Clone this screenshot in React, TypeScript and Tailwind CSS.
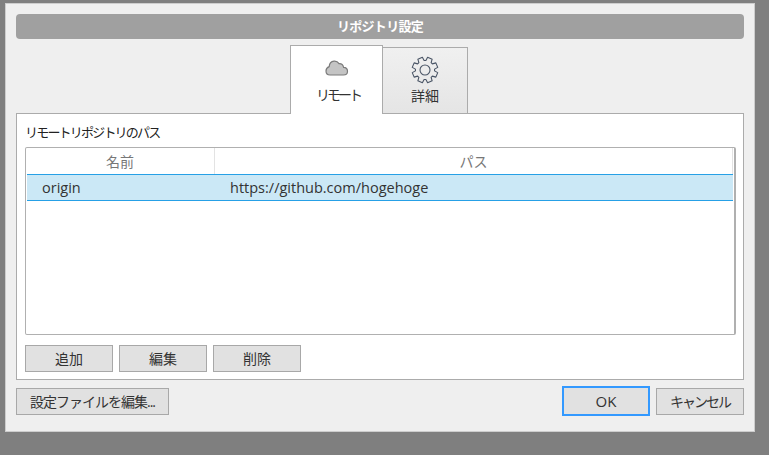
const font = { fontFamily: '"Open Sans", "Noto Sans CJK JP", sans-serif' };

function Btn({ label, className = "" }: { label: string; className?: string }) {
  return (
    <button className={`flex h-[27px] w-[88px] items-center justify-center border border-[#a8a8a8] bg-[#e1e1e1] text-[14px] text-[#333] ${className}`}>
      {label}
    </button>
  );
}

function CloudIcon() {
  return (
    <svg width="24" height="16" viewBox="0 0 24 16">
      <path
        d="M5 15 H18.5 C21 15 22.5 13.4 22.5 11.2 C22.5 9 21 7.4 18.6 7.3 C18 4.8 16.2 3.4 14 3.6 C12.8 1.8 11 1 9 1.2 C6.2 1.5 4.4 3.6 4.2 6.6 C2.2 7.4 1 9 1 11 C1 13.4 2.8 15 5 15 Z"
        fill="#c4c4c4"
        stroke="#7b7b7b"
        strokeWidth="1.2"
      />
    </svg>
  );
}

// eight wide teeth, same outline as the windows cog
function GearIcon() {
  const pts: string[] = [];
  for (let i = 0; i < 8; i++) {
    const a = (i * Math.PI) / 4 + Math.PI / 8;
    const at = (r: number, d: number) => `${(14 + r * Math.cos(a + d)).toFixed(2)},${(14 + r * Math.sin(a + d)).toFixed(2)}`;
    pts.push(at(9.6, -0.3), at(13, -0.19), at(13, 0.19), at(9.6, 0.3));
  }
  return (
    <svg width="28" height="28" viewBox="0 0 28 28" fill="none" stroke="#4a5566" strokeWidth="1.1" strokeLinejoin="round">
      <polygon points={pts.join(" ")} />
      <circle cx="14" cy="14" r="5" />
    </svg>
  );
}

export default function App() {
  return (
    <div style={font} className="h-[455px] w-[769px] overflow-hidden bg-[#7f7f7f] pl-[5px] pt-[3px]">
      <div className="flex h-[429px] w-[750px] flex-col border border-[#cdcdcd] bg-[#efefef] px-[10px] pt-[10px]">
        <div className="flex h-[25px] w-[728px] items-center justify-center rounded-[4px] bg-[#a0a0a0] text-[13px] font-bold tracking-[-0.7px] text-white">
          リポジトリ設定
        </div>

        <div className="mt-[6px] flex h-[68px] items-end justify-center">
          <div className="relative z-10 -mb-px ml-[-2px] flex h-[69px] w-[93px] flex-col items-center border-x border-t border-[#ababab] bg-white pt-[14px] text-[13px] text-[#333]">
            <CloudIcon />
            <span className="mt-[10px] pl-[3px] text-[14px] leading-[18px] tracking-[-3px]">リモート</span>
          </div>
          <div className="flex h-[66px] w-[85px] flex-col items-center border-r border-t border-[#ababab] bg-gradient-to-b from-[#f0f0f0] to-[#e5e5e5] pt-[8px] text-[14px] text-[#333]">
            <GearIcon />
            <span className="mt-[3px] leading-[18px]">詳細</span>
          </div>
        </div>

        <div className="flex h-[267px] w-[728px] flex-col border border-[#ababab] bg-white px-[8px]">
          <div className="mt-[9px] h-[24px] text-[13px] leading-[19px] tracking-[-1.8px] text-[#222]">リモートリポジトリのパス</div>
          <div className="h-[188px] w-[711px] rounded-[2px] border border-r-2 border-[#b0b0b0]">
            <div className="flex h-[26px] text-[14px] text-[#777]">
              <div className="flex w-[189px] items-center justify-center border-r border-[#e3e3e3]">名前</div>
              <div className="flex w-[518px] items-center justify-center border-r border-[#e3e3e3]">パス</div>
            </div>
            <div className="ml-[1px] flex h-[27px] w-[706px] items-center border-y border-[#26a0e6] bg-[#cbe8f6] text-[14.5px] text-[#333]">
              <span className="w-[203px] pl-[15px]">origin</span>
              <span>https://github.com/hogehoge</span>
            </div>
          </div>
          <div className="mt-[10px] flex gap-[6px]">
            <Btn label="追加" />
            <Btn label="編集" />
            <Btn label="削除" />
          </div>
        </div>

        <div className="mt-[6px] flex h-[30px] w-[728px] items-center">
          <Btn label="設定ファイルを編集..." className="w-[153px] tracking-[-1px]" />
          <button className="ml-auto flex h-[30px] w-[88px] items-center justify-center border-2 border-[#3399ff] bg-[#e1e1e1] text-[15px] font-medium text-[#333]">
            OK
          </button>
          <Btn label="キャンセル" className="ml-[6px] tracking-[-2px]" />
        </div>
      </div>
    </div>
  );
}
